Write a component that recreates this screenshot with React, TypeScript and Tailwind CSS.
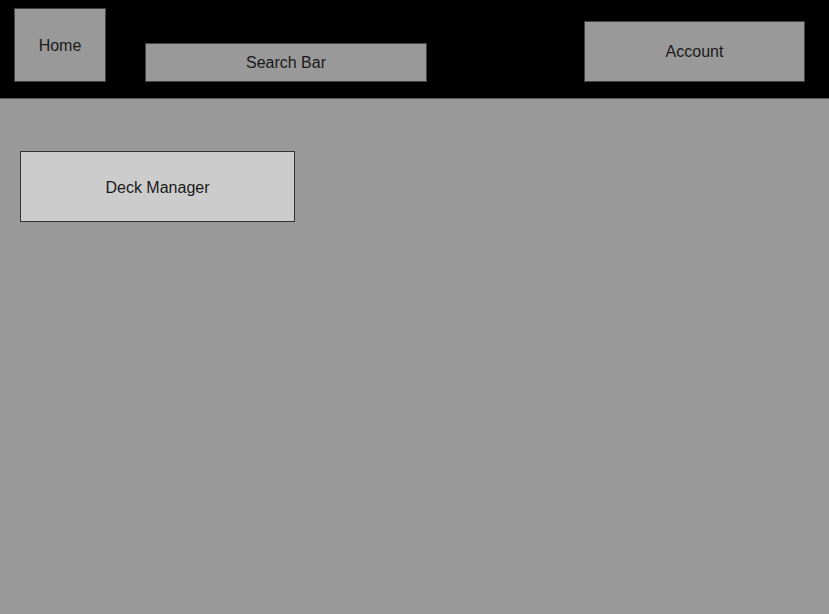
import React from "react";

export default function App() {
  return (
    <div
      className="w-[829px] h-[614px] flex flex-col bg-[#999999] text-[#1a1a1a] overflow-hidden"
      style={{ fontFamily: '"Liberation Sans", Arial, sans-serif' }}
    >
      <header className="h-[99px] shrink-0 bg-black border-b border-[#5a5a5a] flex items-end justify-between pl-[14px] pr-[24px] pb-[16px]">
        <div className="flex items-end gap-[39px]">
          <div className="w-[92px] h-[74px] pt-[1px] bg-[#999999] border border-[#444444] flex items-center justify-center text-[16px]">
            Home
          </div>
          <div className="w-[282px] h-[39px] pt-[1px] bg-[#999999] border border-[#444444] flex items-center justify-center text-[16px]">
            Search Bar
          </div>
        </div>
        <div className="w-[221px] h-[61px] pt-[1px] bg-[#999999] border border-[#444444] flex items-center justify-center text-[16px]">
          Account
        </div>
      </header>
      <main className="flex-1 pl-[20px] pt-[52px]">
        <div className="w-[275px] h-[71px] pt-[2px] bg-[#cccccc] border border-[#333333] flex items-center justify-center text-[16px]">
          Deck Manager
        </div>
      </main>
    </div>
  );
}
